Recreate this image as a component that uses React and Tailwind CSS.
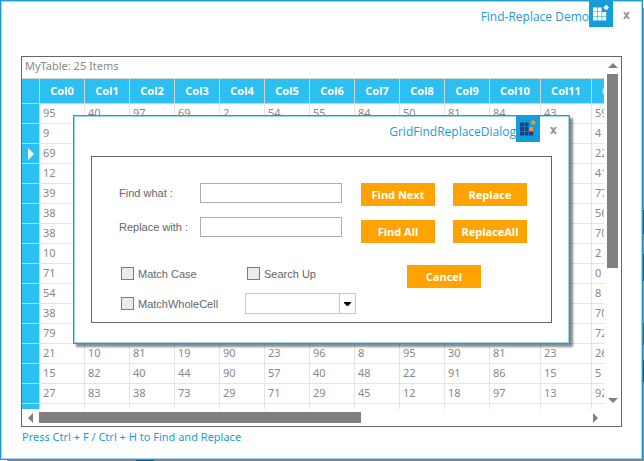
import { useState } from "react";

const COLUMNS = ["Col0", "Col1", "Col2", "Col3", "Col4", "Col5", "Col6", "Col7", "Col8", "Col9", "Col10", "Col11", "Col12"];

const ROWS = [
  [95, 40, 97, 69, 2, 54, 55, 84, 50, 81, 84, 43, 59],
  [9, "", "", "", "", "", "", "", "", "", "", "", 4],
  [69, "", "", "", "", "", "", "", "", "", "", "", 22],
  [12, "", "", "", "", "", "", "", "", "", "", "", 41],
  [39, "", "", "", "", "", "", "", "", "", "", "", 77],
  [38, "", "", "", "", "", "", "", "", "", "", "", 56],
  [38, "", "", "", "", "", "", "", "", "", "", "", 70],
  [10, "", "", "", "", "", "", "", "", "", "", "", 2],
  [71, "", "", "", "", "", "", "", "", "", "", "", 0],
  [54, "", "", "", "", "", "", "", "", "", "", "", 8],
  [38, "", "", "", "", "", "", "", "", "", "", "", 70],
  [79, "", "", "", "", "", "", "", "", "", "", "", 72],
  [21, 10, 81, 19, 90, 23, 96, 8, 95, 30, 81, 23, 26],
  [15, 82, 40, 44, 90, 57, 40, 48, 22, 91, 86, 15, 5],
  [27, 83, 38, 73, 29, 71, 29, 45, 12, 18, 97, 13, 92],
  ["", "", "", "", "", "", "", "", "", "", "", "", ""],
];

const CURRENT_ROW = 2;

function GridLogo({ square, accent }) {
  return (
    <span className="block h-[26px] w-6 shrink-0 bg-[#119eda]">
      <svg viewBox="0 0 24 26" className="block h-[26px] w-6" aria-hidden="true">
        <path
          d="M4 6.4h4v4H4zM8.6 6.4h4v4h-4zM4 11h4v4H4zM8.6 11h4v4h-4zM4 15.6h4v4H4zM8.6 15.6h4v4h-4zM13.2 15.6h4v4h-4z"
          fill={square}
        />
        <path d="M13.2 11h4v4h-4zM17.2 3.8L20 6.6L17.2 9.4L14.4 6.6z" fill={accent} />
      </svg>
    </span>
  );
}

function TitleBar({ title, logo }) {
  return (
    <header className="flex justify-end">
      <h1 className="pt-[6px] text-[12px] leading-5 text-[#1b9bd8]">{title}</h1>
      {logo}
      <button type="button" aria-label="Close" className="ml-[10px] mt-[11px] block size-[7px]">
        <svg viewBox="0 0 7 7" className="block size-[7px]" aria-hidden="true">
          <path d="M1 0L6 7M6 0L1 7" stroke="#999" strokeWidth="2" />
        </svg>
      </button>
    </header>
  );
}

function DataGrid() {
  return (
    <section className="flex flex-col border border-[#666] font-['Noto_Sans',sans-serif] text-[11px]">
      <div className="flex">
        <div className="min-w-0 flex-1">
          <div className="h-[21px] pl-[3px] leading-[18px] text-[#888]">MyTable: 25 Items</div>
          <div className="h-[331px] overflow-hidden">
            <table className="w-[621px] table-fixed border-separate border-spacing-0">
              <colgroup>
                <col className="w-[18px]" />
                {COLUMNS.map((c, i) => (
                  <col key={c} className={i >= 10 ? "w-[51px]" : "w-[45px]"} />
                ))}
              </colgroup>
              <thead>
                <tr className="h-[26px] bg-[#2bbff2] text-white">
                  <th className="border-y border-r border-[#d3d3d3] p-0" aria-label="Row" />
                  {COLUMNS.map((c) => (
                    <th key={c} scope="col" className="border-y border-r border-[#d3d3d3] p-0 text-center font-bold leading-4">{c}</th>
                  ))}
                </tr>
              </thead>
              <tbody>
                {ROWS.map((row, r) => (
                  <tr key={r} className="h-5">
                    <td className="border-b border-r border-[#d3d3d3] bg-[#2bbff2] p-0">
                      {r === CURRENT_ROW && (
                        <svg viewBox="0 0 6 12" className="ml-[6px] block h-3 w-[6px]" aria-hidden="true">
                          <path d="M0 0L6 6L0 12z" fill="#fff" />
                        </svg>
                      )}
                    </td>
                    {row.map((v, c) => (
                      <td key={c} className="border-b border-r border-[#e5e5e5] pb-[2px] pl-[3px] pr-0 pt-0 leading-4 text-[#888]">{v}</td>
                    ))}
                  </tr>
                ))}
              </tbody>
            </table>
          </div>
        </div>
        <div className="flex w-[17px] flex-col items-center py-[6px]">
          <svg viewBox="0 0 10 5" className="h-[5px] w-[10px]" aria-hidden="true"><path d="M5 0L10 5H0z" fill="#808080" /></svg>
          <div className="mt-[6px] h-[194px] w-[11px] bg-[#808080]" />
          <svg viewBox="0 0 10 5" className="mt-auto h-[5px] w-[10px]" aria-hidden="true"><path d="M0 0H10L5 5z" fill="#808080" /></svg>
        </div>
      </div>
      <div className="flex h-[17px] items-center pl-[6px] pr-[23px]">
        <svg viewBox="0 0 5 10" className="h-[10px] w-[5px]" aria-hidden="true"><path d="M5 0V10L0 5z" fill="#808080" /></svg>
        <div className="ml-[6px] h-[11px] w-[322px] bg-[#808080]" />
        <svg viewBox="0 0 5 10" className="ml-auto h-[10px] w-[5px]" aria-hidden="true"><path d="M0 0L5 5L0 10z" fill="#808080" /></svg>
      </div>
    </section>
  );
}

function ActionButton({ children }) {
  return (
    <button type="button" className="h-[23px] w-[74px] bg-[#ffa300] text-center text-[11px] font-bold leading-[23px] text-white">
      {children}
    </button>
  );
}

function CheckBox({ id, label }) {
  return (
    <div className="flex h-[21px] items-center gap-1">
      <input id={id} type="checkbox" className="size-[13px] appearance-none border border-[#1b9bd8] bg-[#ebebeb] checked:bg-[#1b9bd8]" />
      <label htmlFor={id}>{label}</label>
    </div>
  );
}

function TextField({ id, label }) {
  const [value, setValue] = useState("");
  return (
    <div className="flex h-5 items-center">
      <label htmlFor={id} className="w-[81px]">{label}</label>
      <input id={id} type="text" value={value} onChange={(e) => setValue(e.target.value)} className="h-5 w-[142px] border border-[#abadb3] bg-white px-1 outline-none" />
    </div>
  );
}

function FindReplaceDialog() {
  return (
    <div role="dialog" aria-label="GridFindReplaceDialog" className="absolute left-[72px] top-[114px] w-[497px] border border-[#1b9bd8] bg-white shadow-[3px_3px_2px_rgba(0,0,0,0.45)]">
      <div className="border border-[#9bd8f5] px-4 pb-[19px]">
        <div className="-mr-[5px] -mt-px">
          <TitleBar title="GridFindReplaceDialog" logo={<GridLogo square="#2b3a7a" accent="#f0962e" />} />
        </div>
        <form onSubmit={(e) => e.preventDefault()} className="mt-[14px] flex h-[167px] justify-between border border-[#666] pl-[27px] pr-6 pt-[26px] font-['Liberation_Sans',Arial,sans-serif] text-[11px] leading-4 text-[#666]">
          <div>
            <div className="flex flex-col gap-[14px]">
              <TextField id="find" label="Find what :" />
              <TextField id="replace" label="Replace with :" />
            </div>
            <div className="mt-[26px] grid grid-cols-[124px_auto] gap-y-[9px] pl-[2px]">
              <CheckBox id="case" label="Match Case" />
              <div className="pl-[2px]"><CheckBox id="up" label="Search Up" /></div>
              <CheckBox id="whole" label="MatchWholeCell" />
              <div className="flex h-[21px] w-[111px] border border-[#c8c8c8]">
                <select aria-label="Search scope" className="min-w-0 flex-1 appearance-none bg-white outline-none" />
                <span className="flex w-4 items-center justify-center border-l border-[#c8c8c8]">
                  <svg viewBox="0 0 7 4" className="h-1 w-[7px]" aria-hidden="true"><path d="M0 0H7V1L4 4H3L0 1z" fill="#000" /></svg>
                </span>
              </div>
            </div>
          </div>
          <div className="flex flex-col items-center font-['Open_Sans','Noto_Sans',sans-serif]">
            <div className="grid grid-cols-[74px_74px] gap-x-[18px] gap-y-[14px]">
              <ActionButton>Find Next</ActionButton>
              <ActionButton>Replace</ActionButton>
              <ActionButton>Find All</ActionButton>
              <ActionButton>ReplaceAll</ActionButton>
            </div>
            <div className="mt-[22px]">
              <ActionButton>Cancel</ActionButton>
            </div>
          </div>
        </form>
      </div>
    </div>
  );
}

export default function App() {
  return (
    <div className="min-h-screen bg-[#8c8c8c] font-['Open_Sans','Noto_Sans',sans-serif]">
      <div className="flex">
        <main className="relative min-w-0 flex-1 border border-[#1b9bd8] bg-white">
          <div className="border border-[#9bd8f5] px-[19px] pb-3">
            <div className="-mr-2 -mt-px">
              <TitleBar title="Find-Replace Demo" logo={<GridLogo square="#fff" accent="#fff" />} />
            </div>
            <div className="mt-[29px]">
              <DataGrid />
            </div>
            <p className="pl-px pt-px font-['Noto_Sans',sans-serif] text-[11px] leading-[18px] text-[#1b9bd8]">Press Ctrl + F / Ctrl + H to Find and Replace</p>
          </div>
          <FindReplaceDialog />
        </main>
        {/* Sliver of the desktop behind the window's right edge */}
        <div className="flex w-px flex-col" aria-hidden="true">
          <div className="h-2 bg-white" />
          <div className="mt-[202px] h-6 bg-[#00587c]" />
          <div className="mt-5 h-[27px] bg-[#00587c]" />
          <div className="mt-[42px] h-[22px] bg-[#7a5a14]" />
          <div className="mt-[15px] h-[22px] bg-[#1f4a5c]" />
        </div>
      </div>
      {/* Sliver of the desktop below the window */}
      <div className="flex h-px" aria-hidden="true">
        <div className="w-[7px] bg-white" />
        <div className="ml-[129px] w-[18px] bg-[#00587c]" />
      </div>
    </div>
  );
}
